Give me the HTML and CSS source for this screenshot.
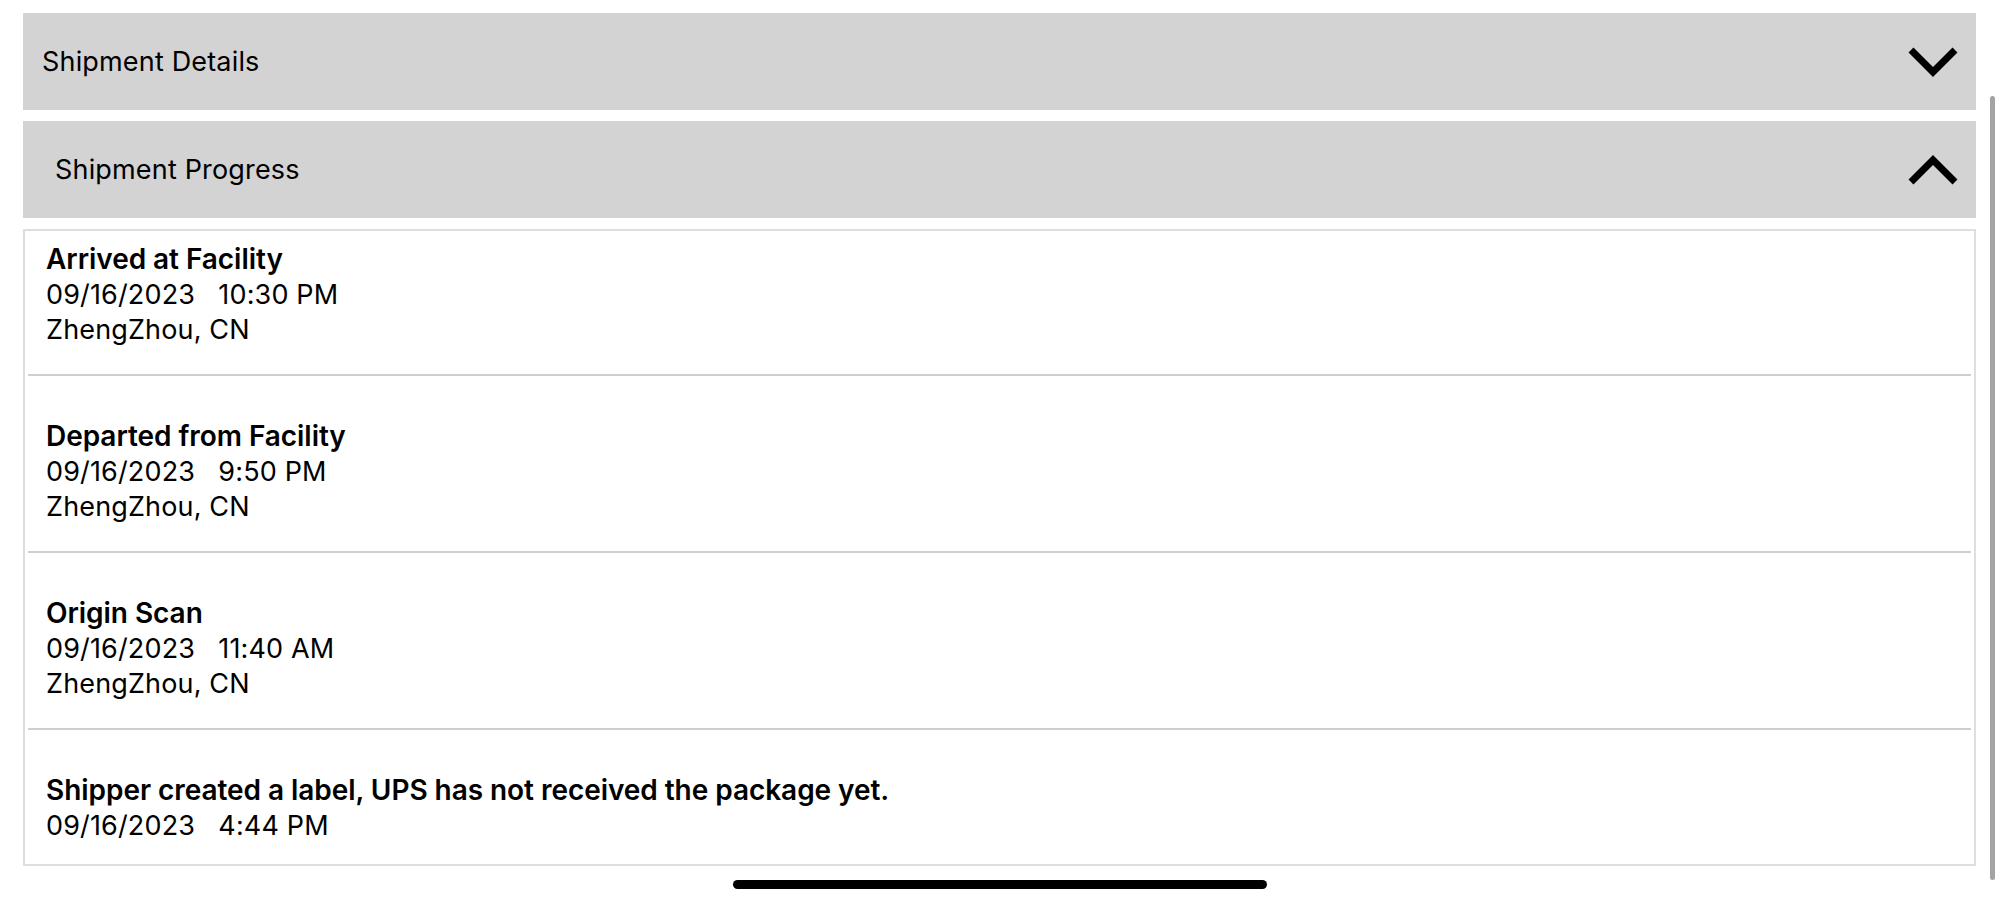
FILE: index.html
```html
<!DOCTYPE html>
<html lang="en">
<head>
<meta charset="utf-8">
<title>Shipment</title>
<link rel="stylesheet" href="styles.css">
</head>
<body>
<main class="page">
  <section class="panel">
    <div class="panel-head">
      <span class="panel-title">Shipment Details</span>
      <svg class="chev" viewBox="0 0 52 34" width="52" height="34"><polyline points="4,5 26,27 48,5" fill="none" stroke="#000" stroke-width="7" stroke-linejoin="miter"/></svg>
    </div>
  </section>
  <section class="panel">
    <div class="panel-head">
      <span class="panel-title indent">Shipment Progress</span>
      <svg class="chev" viewBox="0 0 52 34" width="52" height="34"><polyline points="4,29 26,7 48,29" fill="none" stroke="#000" stroke-width="7" stroke-linejoin="miter"/></svg>
    </div>
    <div class="events">
      <div class="event first">
        <div class="ev-title">Arrived at Facility</div>
        <div class="ev-line">09/16/2023&nbsp;&nbsp; 10:30 PM</div>
        <div class="ev-line">ZhengZhou, CN</div>
      </div>
      <div class="event">
        <div class="ev-title">Departed from Facility</div>
        <div class="ev-line">09/16/2023&nbsp;&nbsp; 9:50 PM</div>
        <div class="ev-line">ZhengZhou, CN</div>
      </div>
      <div class="event">
        <div class="ev-title">Origin Scan</div>
        <div class="ev-line">09/16/2023&nbsp;&nbsp; 11:40 AM</div>
        <div class="ev-line">ZhengZhou, CN</div>
      </div>
      <div class="event last">
        <div class="ev-title">Shipper created a label, UPS has not received the package yet.</div>
        <div class="ev-line">09/16/2023&nbsp;&nbsp; 4:44 PM</div>
      </div>
    </div>
  </section>
</main>
<div class="scrollbar"></div>
<div class="home-indicator"></div>
</body>
</html>
```

FILE: styles.css
```css
html, body {
  margin: 0;
  padding: 0;
  background: #ffffff;
  width: 2000px;
  height: 902px;
  overflow: hidden;
}

body {
  font-family: Inter, "Liberation Sans", Arial, sans-serif;
  color: #000;
  position: relative;
}

.page {
  padding: 13px 24px 0 23px;
  display: flex;
  flex-direction: column;
  gap: 11px;
}

.panel {
  display: flex;
  flex-direction: column;
  gap: 11px;
}

.panel-head {
  height: 97px;
  background: #d3d3d3;
  display: flex;
  align-items: center;
  justify-content: space-between;
  padding: 0 17px 0 19px;
}

.panel-title {
  font-size: 27px;
  font-weight: 400;
  letter-spacing: 0.17px;
}

.panel-title.indent {
  padding-left: 13px;
}

.chev {
  display: block;
}

.events {
  border: 2px solid #dedede;
  padding: 0 3px;
}

.event {
  padding: 43px 18px 27px;
  border-bottom: 2px solid #cfcfcf;
  font-size: 27px;
  line-height: 35px;
}

.event.first {
  padding-top: 11px;
}

.event.last {
  border-bottom: none;
  padding-bottom: 21px;
}

.ev-title {
  font-size: 28px;
  font-weight: 600;
  letter-spacing: -0.05px;
}

.ev-line {
  font-weight: 400;
  letter-spacing: 0.15px;
}

.scrollbar {
  position: absolute;
  left: 1990px;
  top: 96px;
  width: 5px;
  height: 784px;
  border-radius: 3px;
  background: #a3a3a3;
}

.home-indicator {
  position: absolute;
  left: 733px;
  top: 880px;
  width: 534px;
  height: 9px;
  border-radius: 5px;
  background: #000;
}
```
